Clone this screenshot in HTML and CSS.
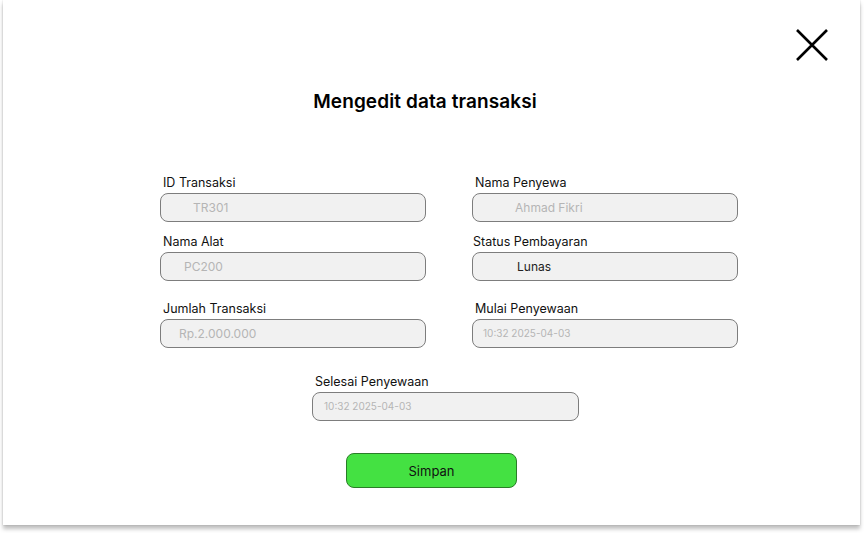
FILE: index.html
```html
<!DOCTYPE html>
<html lang="id">
<head>
<meta charset="utf-8">
<title>Mengedit data transaksi</title>
<link rel="stylesheet" href="styles.css">
</head>
<body>
<div class="card">
  <button class="close" aria-label="Tutup">
    <svg width="32" height="32" viewBox="0 0 32 32"><path d="M1 1 L31 31 M31 1 L1 31" stroke="#000" stroke-width="2.6" fill="none"/></svg>
  </button>
  <h1 class="title">Mengedit data transaksi</h1>
  <div class="form">
    <div class="row row1">
      <div class="field"><label class="lbl">ID Transaksi</label><div class="input ph ind-33">TR301</div></div>
      <div class="field"><label class="lbl">Nama Penyewa</label><div class="input ph ind-43">Ahmad Fikri</div></div>
    </div>
    <div class="row row2">
      <div class="field"><label class="lbl">Nama Alat</label><div class="input ph ind-24">PC200</div></div>
      <div class="field"><label class="lbl lbl-tight">Status Pembayaran</label><div class="input val ind-45">Lunas</div></div>
    </div>
    <div class="row row3">
      <div class="field"><label class="lbl">Jumlah Transaksi</label><div class="input ph ind-19">Rp.2.000.000</div></div>
      <div class="field"><label class="lbl">Mulai Penyewaan</label><div class="input ph small ind-11">10:32 2025-04-03</div></div>
    </div>
    <div class="row row4">
      <div class="field"><label class="lbl">Selesai Penyewaan</label><div class="input ph small ind-12">10:32 2025-04-03</div></div>
    </div>
    <div class="actions">
      <button class="save">Simpan</button>
    </div>
  </div>
</div>
</body>
</html>
```
FILE: styles.css
```css
* { box-sizing: border-box; }
html, body { margin: 0; padding: 0; background: #fff; }
body {
  font-family: "Inter", "Open Sans", sans-serif;
  color: #111;
  width: 864px;
  height: 533px;
  overflow: hidden;
}
.card {
  position: relative;
  margin-left: 3px;
  width: 857px;
  height: 525px;
  background: #fff;
  box-shadow: 0 4px 4px rgba(0,0,0,0.25), 0 0 1.5px rgba(0,0,0,0.18);
  padding-top: 89px;
}
.close {
  position: absolute;
  left: 793px;
  top: 29px;
  width: 32px;
  height: 32px;
  padding: 0;
  border: 0;
  background: none;
  display: block;
}
.close svg { display: block; }
.title {
  margin: 0 13px 0 0;
  text-align: center;
  font-size: 19px;
  line-height: 25px;
  font-weight: 600;
  letter-spacing: 0.1px;
  color: #000;
}
.form {
  margin-left: 157px;
  width: 578px;
}
.row {
  display: grid;
  grid-template-columns: 266px 266px;
  column-gap: 46px;
}
.row1 { margin-top: 61px; }
.row2 { margin-top: 12px; }
.row3 { margin-top: 20px; }
.row4 { margin-top: 26px; margin-left: 152px; grid-template-columns: 267px; }
.field { display: flex; flex-direction: column; gap: 2px; }
.lbl {
  font-size: 12.5px;
  line-height: 16px;
  padding-left: 3px;
  color: #111;
}
.lbl-tight { padding-left: 1px; }
.input {
  height: 29px;
  border: 1px solid #7d7d7d;
  border-radius: 8px;
  background: #f1f1f1;
  font-size: 12px;
  line-height: 27px;
}
.input.small { font-size: 10px; }
.ph { color: #b5b5b5; }
.val { color: #222; }
.ind-33 { padding-left: 32px; }
.ind-43 { padding-left: 42px; }
.ind-24 { padding-left: 23px; }
.ind-45 { padding-left: 44px; }
.ind-19 { padding-left: 18px; }
.ind-11 { padding-left: 10px; }
.ind-12 { padding-left: 11px; }
.actions {
  margin-top: 32px;
  margin-left: 186px;
}
.save {
  display: block;
  width: 171px;
  height: 35px;
  border: 1px solid #2a7d28;
  border-radius: 8px;
  background: #44e142;
  font-family: "Inter", "Open Sans", sans-serif;
  font-size: 13px;
  color: #111;
  padding: 0;
}
```
